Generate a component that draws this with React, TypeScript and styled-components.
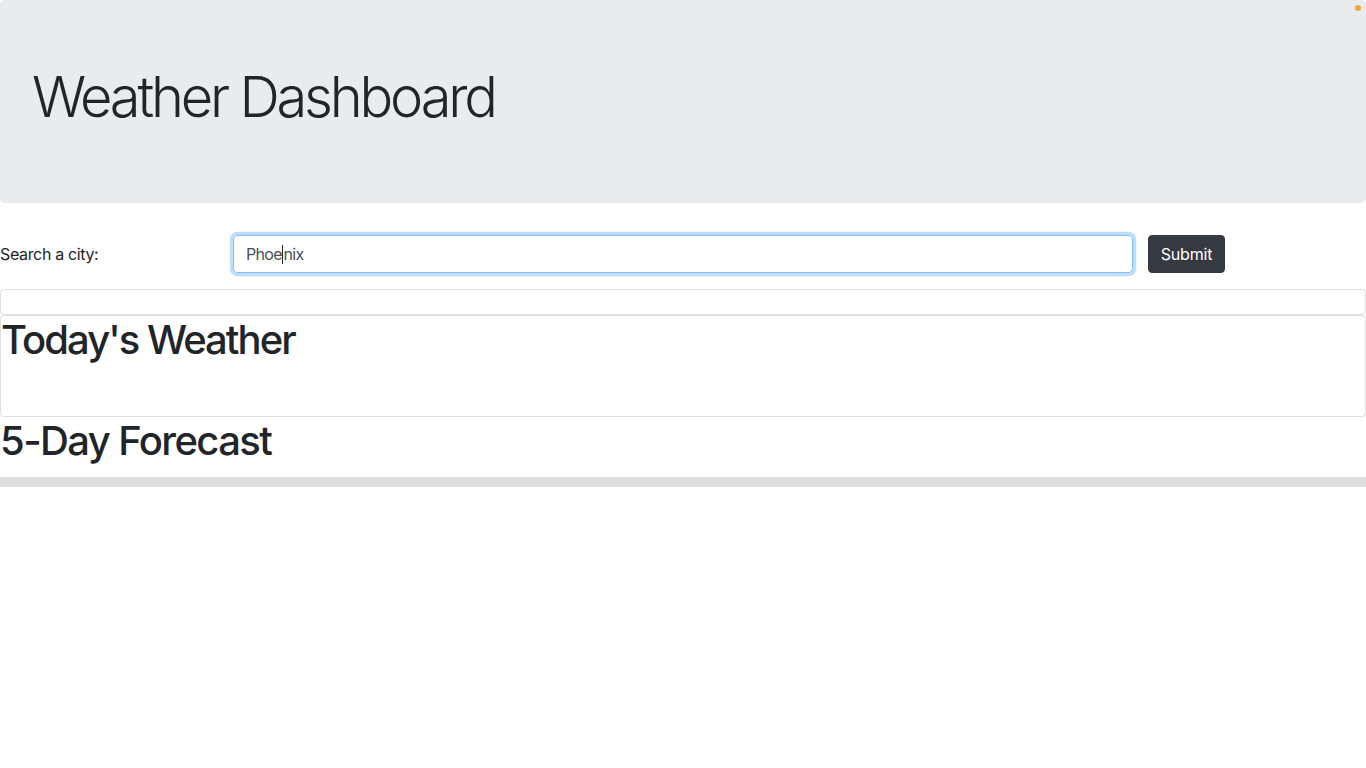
import React from "react";
import styled, { createGlobalStyle } from "styled-components";

const Global = createGlobalStyle`
  html, body { margin: 0; padding: 0; background: #fff; }
  body {
    font-family: Inter, "Noto Sans", "Liberation Sans", sans-serif;
    font-size: 16px;
    line-height: 1.5;
    color: #212529;
  }
  * { box-sizing: border-box; }
`;

const Page = styled.div`
  position: relative;
  width: 1366px;
`;

const Jumbotron = styled.header`
  background: #e9ecef;
  border-radius: 4.8px;
  padding: 64px 32px;
  margin-bottom: 32px;
`;

const Display = styled.h1`
  margin: 0 0 8px;
  font-size: 56px;
  font-weight: 300;
  line-height: 1.2;
  letter-spacing: -3.2px;
`;

const Dot = styled.span`
  position: absolute;
  top: 5px;
  right: 5px;
  width: 6px;
  height: 6px;
  border-radius: 50%;
  background: #f5a33a;
`;

const SearchRow = styled.form`
  display: flex;
  align-items: center;
  height: 38px;
  margin: 0 0 16px;
`;

const Label = styled.label`
  width: 233px;
  font-size: 16px;
  letter-spacing: -0.35px;
`;

const FakeInput = styled.div`
  width: 900px;
  height: 38px;
  padding: 6px 12px;
  border: 1px solid #80bdff;
  border-radius: 4px;
  box-shadow: 0 0 0 3.2px rgba(0, 123, 255, 0.25);
  font-size: 16px;
  line-height: 24px;
  color: #495057;
  letter-spacing: -0.7px;
  display: flex;
  align-items: center;
`;

const Caret = styled.span`
  display: inline-block;
  width: 1px;
  height: 19px;
  margin: 0 0.7px 0 0;
  background: #212529;
`;

const Button = styled.button`
  margin-left: 15px;
  height: 38px;
  width: 77px;
  padding: 6px 0;
  border: 1px solid #343a40;
  border-radius: 4px;
  background: #343a40;
  color: #fff;
  font-family: inherit;
  font-size: 16px;
  line-height: 24px;
  letter-spacing: -0.2px;
`;

const Card = styled.section<{ $minH: number }>`
  border: 1px solid rgba(0, 0, 0, 0.125);
  border-radius: 4px;
  min-height: ${(p) => p.$minH}px;
`;

const Heading = styled.h1<{ $track: number }>`
  margin: 0 0 8px;
  font-size: 40px;
  font-weight: 500;
  line-height: 1.2;
  letter-spacing: ${(p) => p.$track}px;
`;

const Bar = styled.div`
  height: 10px;
  background: #dedede;
  margin-top: 12px;
`;

export default function App() {
  return (
    <Page>
      <Global />
      <Dot />
      <Jumbotron>
        <Display>Weather Dashboard</Display>
      </Jumbotron>
      <SearchRow onSubmit={(e) => e.preventDefault()}>
        <Label>Search a city:</Label>
        <FakeInput>
          Phoe<Caret />nix
        </FakeInput>
        <Button type="submit">Submit</Button>
      </SearchRow>
      <Card $minH={26} />
      <Card $minH={102}>
        <Heading $track={-1.95}>Today's Weather</Heading>
      </Card>
      <Heading $track={-1.6}>5-Day Forecast</Heading>
      <Bar />
    </Page>
  );
}
